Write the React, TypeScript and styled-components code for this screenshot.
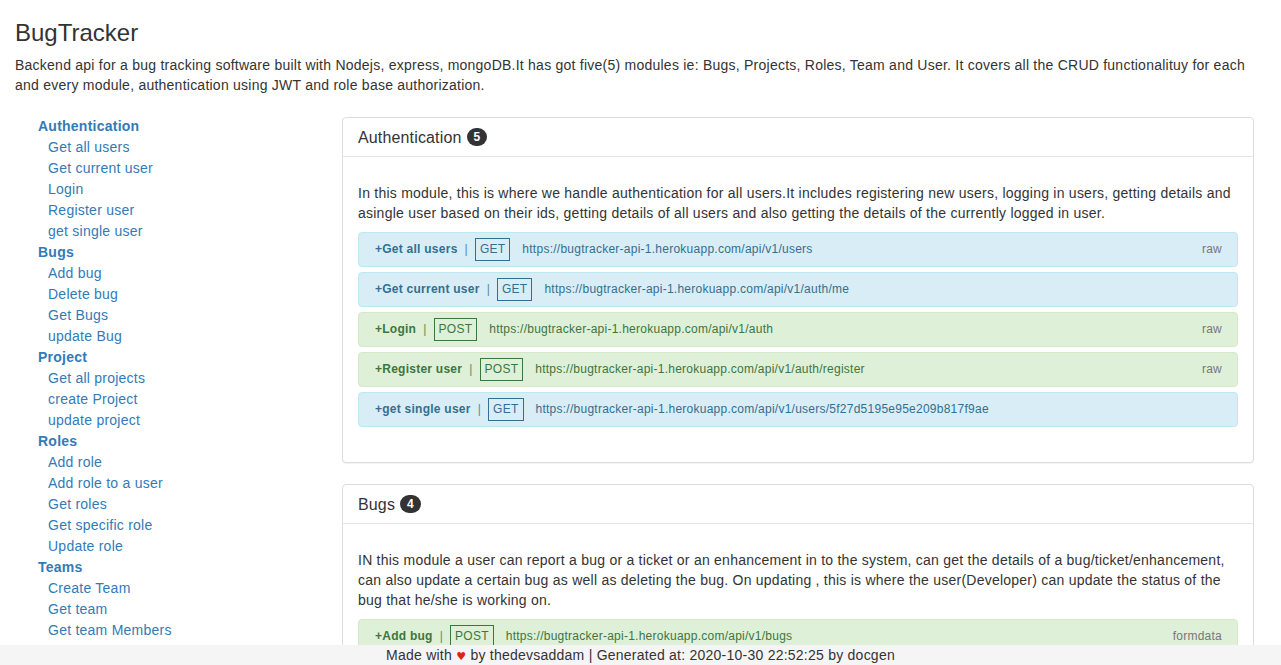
import React from "react";
import styled, { createGlobalStyle } from "styled-components";

const Global = createGlobalStyle`
  html { scrollbar-width: none; }
  html::-webkit-scrollbar, body::-webkit-scrollbar { display: none; }
  * { box-sizing: border-box; }
  body {
    margin: 0;
    background: #fff;
    color: #333;
    font-family: "Liberation Sans", Arial, Helvetica, sans-serif;
    font-size: 14px;
    line-height: 1.42857;
    letter-spacing: 0.24px;
  }
`;

type Tone = "info" | "success" | "danger" | "warning";

const tones: Record<Tone, { bg: string; border: string; fg: string }> = {
  info: { bg: "#d9edf7", border: "#bce8f1", fg: "#31708f" },
  success: { bg: "#dff0d8", border: "#d6e9c6", fg: "#3c763d" },
  danger: { bg: "#f2dede", border: "#ebccd1", fg: "#a94442" },
  warning: { bg: "#fcf8e3", border: "#faebcc", fg: "#8a6d3b" },
};

const Page = styled.div`
  padding: 0 15px 60px;
`;

const Title = styled.h3`
  margin: 20px 0 10px;
  font-size: 24px;
  font-weight: 500;
  line-height: 1.1;
  letter-spacing: 0;
`;

const Intro = styled.p`
  margin: 0 0 10px;
`;

const Layout = styled.div`
  display: flex;
  align-items: flex-start;
  margin: 21px 12px 0 0;
`;

const Sidebar = styled.nav`
  flex: 0 0 327px;
  margin-top: -1px;
  line-height: 21px;
`;

const NavGroup = styled.div`
  display: flex;
  flex-direction: column;
`;

const NavHeading = styled.a`
  padding-left: 23px;
  color: #337ab7;
  font-weight: bold;
  text-decoration: none;
`;

const NavItem = styled.a`
  padding-left: 33px;
  color: #337ab7;
  text-decoration: none;
`;

const Content = styled.main`
  flex: 1;
  min-width: 0;
`;

const Panel = styled.section`
  border: 1px solid #ddd;
  border-radius: 4px;
  background: #fff;
  box-shadow: 0 1px 1px rgba(0, 0, 0, 0.05);
  margin-bottom: 21px;
`;

const PanelHeading = styled.div`
  padding: 10px 15px;
  border-bottom: 1px solid #e6e6e6;
`;

const PanelTitle = styled.h3`
  margin: 0;
  display: flex;
  align-items: center;
  font-size: 16px;
  font-weight: 500;
  line-height: 1.1;
  letter-spacing: 0.15px;
  color: #333;
`;

const Badge = styled.span`
  margin-left: 5px;
  padding: 3px 7px;
  border-radius: 10px;
  background: #333;
  color: #fff;
  font-size: 12px;
  font-weight: bold;
  line-height: 1;
  letter-spacing: 0;
`;

const PanelBody = styled.div`
  padding: 27px 15px 30px;
`;

const Description = styled.p`
  margin: 0 0 8px;
`;

const Endpoint = styled.a<{ $tone: Tone }>`
  display: flex;
  align-items: center;
  height: 35px;
  margin-bottom: 5px;
  padding: 0 15px 0 16px;
  border: 1px solid ${(p) => tones[p.$tone].border};
  border-radius: 4px;
  background: ${(p) => tones[p.$tone].bg};
  color: ${(p) => tones[p.$tone].fg};
  font-size: 12px;
  letter-spacing: 0.25px;
  text-decoration: none;
  white-space: nowrap;
`;

const EndpointName = styled.strong`
  font-weight: bold;
`;

const Divider = styled.span`
  margin: 0 7px;
  opacity: 0.8;
`;

const Method = styled.span`
  display: inline-block;
  padding: 3px 4px;
  border: 1px solid currentColor;
  line-height: 15px;
`;

const Url = styled.span`
  margin-left: 12px;
`;

const BodyMode = styled.span`
  margin-left: auto;
  color: #777;
`;

const Footer = styled.footer`
  position: fixed;
  left: 0;
  right: 0;
  bottom: 0;
  height: 20px;
  background: #f5f5f5;
  color: #333;
  text-align: center;
  line-height: 20px;
  font-size: 14px;
  letter-spacing: 0.24px;
`;

const Heart = styled.span`
  color: #e0201b;
  font-family: "DejaVu Sans", sans-serif;
  font-size: 11px;
`;

const nav = [
  { title: "Authentication", items: ["Get all users", "Get current user", "Login", "Register user", "get single user"] },
  { title: "Bugs", items: ["Add bug", "Delete bug", "Get Bugs", "update Bug"] },
  { title: "Project", items: ["Get all projects", "create Project", "update project"] },
  { title: "Roles", items: ["Add role", "Add role to a user", "Get roles", "Get specific role", "Update role"] },
  { title: "Teams", items: ["Create Team", "Get team", "Get team Members"] },
];

const methodTone: Record<string, Tone> = { GET: "info", POST: "success", DELETE: "danger", PUT: "warning", PATCH: "warning" };

const base = "https://bugtracker-api-1.herokuapp.com/api/v1";

const modules = [
  {
    title: "Authentication",
    description:
      "In this module, this is where we handle authentication for all users.It includes registering new users, logging in users, getting details and asingle user based on their ids, getting details of all users and also getting the details of the currently logged in user.",
    endpoints: [
      { name: "Get all users", method: "GET", url: `${base}/users`, mode: "raw" },
      { name: "Get current user", method: "GET", url: `${base}/auth/me`, mode: "" },
      { name: "Login", method: "POST", url: `${base}/auth`, mode: "raw" },
      { name: "Register user", method: "POST", url: `${base}/auth/register`, mode: "raw" },
      { name: "get single user", method: "GET", url: `${base}/users/5f27d5195e95e209b817f9ae`, mode: "" },
    ],
  },
  {
    title: "Bugs",
    description:
      "IN this module a user can report a bug or a ticket or an enhancement in to the system, can get the details of a bug/ticket/enhancement, can also update a certain bug as well as deleting the bug. On updating , this is where the user(Developer) can update the status of the bug that he/she is working on.",
    endpoints: [
      { name: "Add bug", method: "POST", url: `${base}/bugs`, mode: "formdata" },
      { name: "Delete bug", method: "DELETE", url: `${base}/bugs/5f27d5195e95e209b817f9ae`, mode: "" },
      { name: "Get Bugs", method: "GET", url: `${base}/bugs`, mode: "" },
      { name: "update Bug", method: "PUT", url: `${base}/bugs/5f27d5195e95e209b817f9ae`, mode: "raw" },
    ],
  },
];

export default function App() {
  return (
    <>
      <Global />
      <Page>
        <Title>BugTracker</Title>
        <Intro>
          Backend api for a bug tracking software built with Nodejs, express, mongoDB.It has got five(5) modules ie: Bugs,
          Projects, Roles, Team and User. It covers all the CRUD functionalituy for each and every module, authentication
          using JWT and role base authorization.
        </Intro>
        <Layout>
          <Sidebar>
            {nav.map((g) => (
              <NavGroup key={g.title}>
                <NavHeading href="#">{g.title}</NavHeading>
                {g.items.map((i) => (
                  <NavItem key={i} href="#">
                    {i}
                  </NavItem>
                ))}
              </NavGroup>
            ))}
          </Sidebar>
          <Content>
            {modules.map((m) => (
              <Panel key={m.title}>
                <PanelHeading>
                  <PanelTitle>
                    {m.title}
                    <Badge>{m.endpoints.length}</Badge>
                  </PanelTitle>
                </PanelHeading>
                <PanelBody>
                  <Description>{m.description}</Description>
                  {m.endpoints.map((e) => (
                    <Endpoint key={e.name} href="#" $tone={methodTone[e.method]}>
                      <EndpointName>+{e.name}</EndpointName>
                      <Divider>|</Divider>
                      <Method>{e.method}</Method>
                      <Url>{e.url}</Url>
                      {e.mode && <BodyMode>{e.mode}</BodyMode>}
                    </Endpoint>
                  ))}
                </PanelBody>
              </Panel>
            ))}
          </Content>
        </Layout>
      </Page>
      <Footer>
        Made with <Heart>♥</Heart> by thedevsaddam | Generated at: 2020-10-30 22:52:25 by docgen
      </Footer>
    </>
  );
}
